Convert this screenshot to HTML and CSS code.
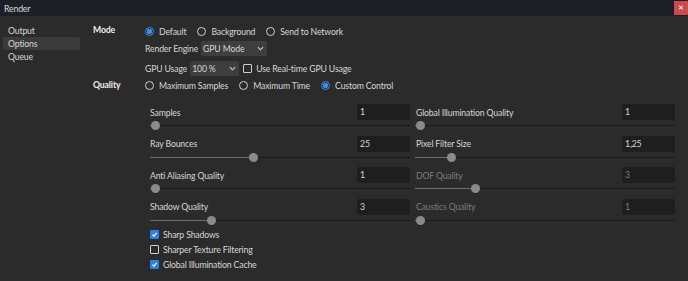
FILE: index.html
```html
<!DOCTYPE html>
<html lang="en">
<head>
    <meta charset="UTF-8">
    <title>Render</title>
    <link rel="stylesheet" href="styles.css">
</head>
<body>
    <div class="titlebar">
        <span class="title">Render</span>
        <button class="close-button">&#x2715;</button>
    </div>
    <div class="window">
        <div class="sidebar">
            <div class="nav-item">Output</div>
            <div class="nav-item active">Options</div>
            <div class="nav-item">Queue</div>
        </div>
        <div class="content">
            <div class="section">
                <div class="section-label">Mode</div>
                <div class="section-body">
                    <div class="radio-row">
                        <label class="radio checked"><span class="dot"></span>Default</label>
                        <label class="radio"><span class="dot"></span>Background</label>
                        <label class="radio"><span class="dot"></span>Send to Network</label>
                    </div>
                    <div class="field-row engine-row">
                        <span class="field-label">Render Engine</span>
                        <div class="select engine">GPU Mode<svg class="chevron" viewBox="0 0 8 5"><path d="M1 1 L4 4 L7 1" /></svg></div>
                    </div>
                    <div class="field-row usage-row">
                        <span class="field-label">GPU Usage</span>
                        <div class="select usage">100 %<svg class="chevron" viewBox="0 0 8 5"><path d="M1 1 L4 4 L7 1" /></svg></div>
                        <label class="check"><span class="box"></span>Use Real-time GPU Usage</label>
                    </div>
                </div>
            </div>
            <div class="section quality">
                <div class="section-label">Quality</div>
                <div class="section-body">
                    <div class="radio-row">
                        <label class="radio"><span class="dot"></span>Maximum Samples</label>
                        <label class="radio"><span class="dot"></span>Maximum Time</label>
                        <label class="radio checked"><span class="dot"></span>Custom Control</label>
                    </div>
                    <div class="sliders">
                        <div class="slider-item">
                            <div class="slider-head"><span>Samples</span><div class="num">1</div></div>
                            <div class="track"><div class="fill" style="width: 5px"></div><div class="thumb"></div></div>
                        </div>
                        <div class="slider-item">
                            <div class="slider-head"><span>Global Illumination Quality</span><div class="num">1</div></div>
                            <div class="track"><div class="fill" style="width: 5px"></div><div class="thumb"></div></div>
                        </div>
                        <div class="slider-item">
                            <div class="slider-head"><span>Ray Bounces</span><div class="num">25</div></div>
                            <div class="track"><div class="fill" style="width: 103px"></div><div class="thumb"></div></div>
                        </div>
                        <div class="slider-item">
                            <div class="slider-head"><span>Pixel Filter Size</span><div class="num">1,25</div></div>
                            <div class="track"><div class="fill" style="width: 36px"></div><div class="thumb"></div></div>
                        </div>
                        <div class="slider-item">
                            <div class="slider-head"><span>Anti Aliasing Quality</span><div class="num">1</div></div>
                            <div class="track"><div class="fill" style="width: 5px"></div><div class="thumb"></div></div>
                        </div>
                        <div class="slider-item disabled">
                            <div class="slider-head"><span>DOF Quality</span><div class="num">3</div></div>
                            <div class="track"><div class="fill" style="width: 60px"></div><div class="thumb"></div></div>
                        </div>
                        <div class="slider-item">
                            <div class="slider-head"><span>Shadow Quality</span><div class="num">3</div></div>
                            <div class="track"><div class="fill" style="width: 61px"></div><div class="thumb"></div></div>
                        </div>
                        <div class="slider-item disabled">
                            <div class="slider-head"><span>Caustics Quality</span><div class="num">1</div></div>
                            <div class="track"><div class="fill" style="width: 5px"></div><div class="thumb"></div></div>
                        </div>
                    </div>
                    <div class="checks">
                        <label class="check checked"><span class="box"><svg viewBox="0 0 10 10"><path d="M2 5.2 L4.2 7.3 L8 2.8" /></svg></span>Sharp Shadows</label>
                        <label class="check"><span class="box"></span>Sharper Texture Filtering</label>
                        <label class="check checked"><span class="box"><svg viewBox="0 0 10 10"><path d="M2 5.2 L4.2 7.3 L8 2.8" /></svg></span>Global Illumination Cache</label>
                    </div>
                </div>
            </div>
        </div>
    </div>
</body>
</html>
```
FILE: styles.css
```css
body {
    margin: 0;
    background-color: #2b2b2b;
    color: #d6d6d6;
    font-family: Lato, "Open Sans", sans-serif;
    font-size: 8.7px;
    letter-spacing: -0.15px;
    overflow: hidden;
}
.titlebar {
    height: 16px;
    background-color: #1c2026;
    display: flex;
    align-items: center;
    justify-content: space-between;
}
.title {
    padding-left: 4px;
    color: #d8d8d8;
}
.close-button {
    width: 14px;
    height: 14px;
    padding: 0;
    border: none;
    background-color: #c94c4c;
    color: #fff;
    font-size: 7px;
    line-height: 14px;
    font-family: "DejaVu Sans", sans-serif;
    font-weight: bold;
}
.window {
    display: flex;
}
.sidebar {
    width: 77px;
    padding: 8px 0 0 3px;
}
.nav-item {
    height: 13px;
    line-height: 13px;
    padding-left: 5px;
    border-radius: 2px;
}
.nav-item.active {
    background-color: #3b3b3b;
}
.content {
    flex: 1;
    padding-left: 13px;
}
.section {
    display: flex;
}
.section-label {
    width: 52px;
    font-weight: bold;
    color: #eeeeee;
    padding-top: 8px;
}
.section-body {
    flex: 1;
}
.radio-row {
    display: flex;
    height: 14px;
    margin-top: 8px;
    align-items: center;
}
.radio {
    display: flex;
    align-items: center;
    margin-right: 11px;
}
.radio .dot {
    width: 7px;
    height: 7px;
    border: 1px solid #cfcfcf;
    border-radius: 50%;
    margin-right: 5px;
}
.radio.checked .dot {
    border-color: #3a8ee8;
    background: radial-gradient(circle, #3a8ee8 0 2.5px, #2b2b2b 3px);
}
.quality {
    margin-top: 2px;
}
.quality .radio-row {
    margin-top: 0;
}
.quality .section-label {
    padding-top: 0;
    line-height: 14px;
}
.field-row {
    display: flex;
    align-items: center;
    height: 15px;
}
.engine-row {
    margin-top: 3px;
}
.usage-row {
    margin-top: 5px;
}
.field-label {
    margin-right: 3px;
}
.select {
    height: 15px;
    line-height: 15px;
    background-color: #3e3e3e;
    border-radius: 2px;
    padding-left: 2px;
    box-sizing: border-box;
    display: flex;
    justify-content: space-between;
    align-items: center;
}
.select.engine {
    width: 66px;
}
.select.usage {
    width: 49px;
}
.chevron {
    width: 7px;
    height: 5px;
    margin-right: 3px;
    fill: none;
    stroke: #d0d0d0;
    stroke-width: 1.2;
}
.check {
    display: flex;
    align-items: center;
}
.usage-row .check {
    margin-left: 4px;
}
.check .box {
    width: 7px;
    height: 7px;
    border: 1px solid #cfcfcf;
    border-radius: 1px;
    margin-right: 4px;
    display: flex;
}
.check.checked .box {
    background-color: #2f80e4;
    border-color: #2f80e4;
}
.check svg {
    width: 7px;
    height: 7px;
    fill: none;
    stroke: #ffffff;
    stroke-width: 1.6;
}
.sliders {
    display: grid;
    grid-template-columns: 260px 260px;
    column-gap: 5px;
    margin-top: 12px;
    margin-left: 5px;
}
.slider-item {
    height: 31.6px;
}
.slider-item.disabled {
    color: #7b7b7b;
}
.slider-head {
    display: flex;
    justify-content: space-between;
    align-items: center;
    height: 16px;
}
.slider-item:nth-child(even) .slider-head span {
    padding-left: 1px;
}
.num {
    width: 53px;
    height: 16px;
    line-height: 16px;
    background-color: #1e1e1e;
    border-radius: 2px;
    padding-left: 3px;
    box-sizing: border-box;
}
.track {
    height: 1px;
    margin-top: 5px;
    background-color: #1a1a1a;
    display: flex;
    align-items: center;
}
.fill {
    height: 1px;
    background-color: #6e6e6e;
}
.thumb {
    width: 9px;
    height: 9px;
    border-radius: 50%;
    background-color: #8a8a8a;
    margin-left: -4px;
}
.checks {
    margin-left: 5px;
    margin-top: -3px;
}
.checks .check {
    height: 15px;
}
```
